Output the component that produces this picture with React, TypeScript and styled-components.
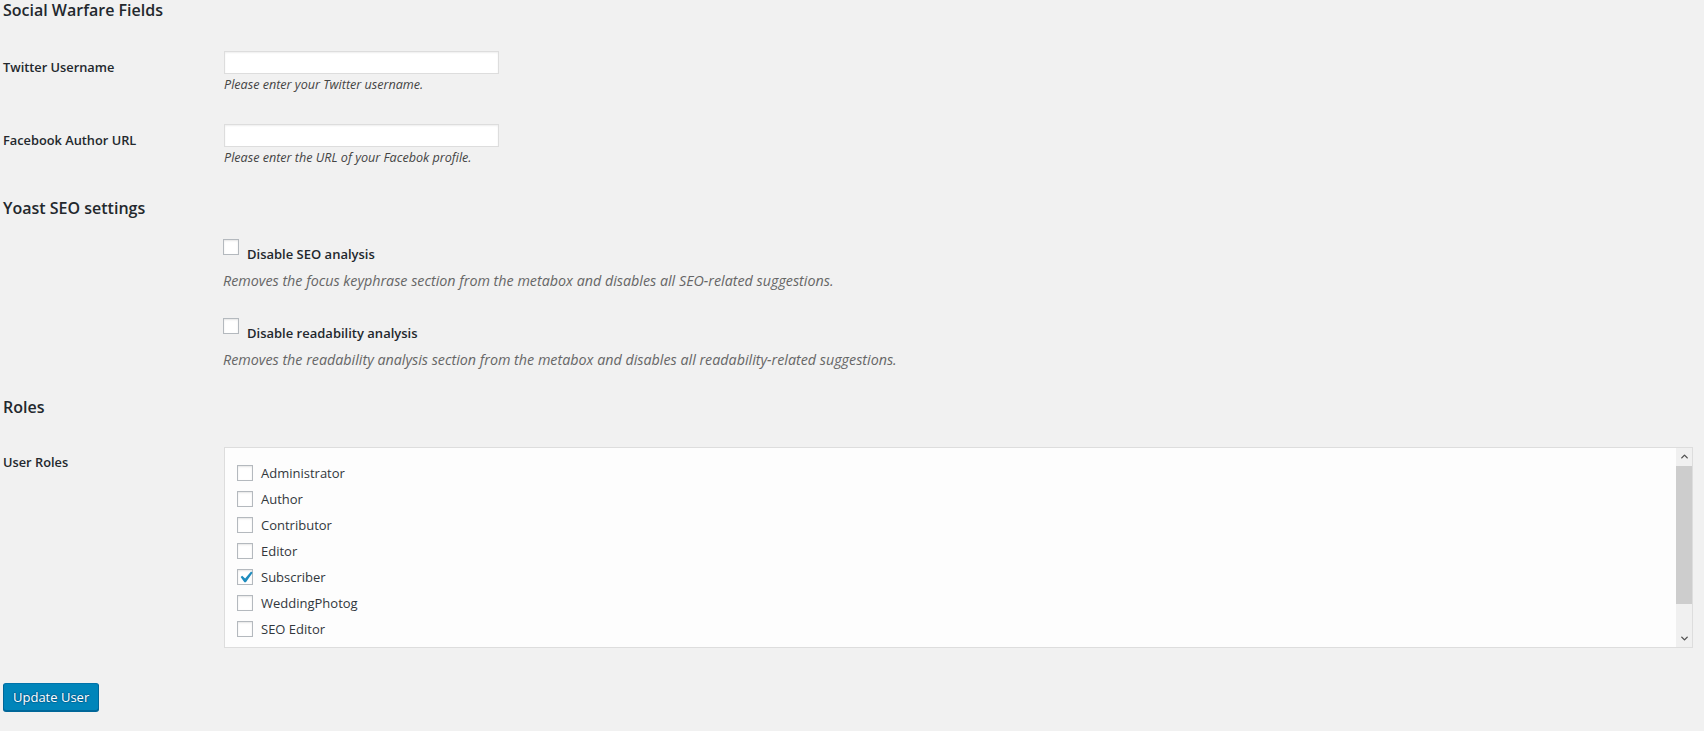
import React, { useState } from "react";
import styled, { createGlobalStyle } from "styled-components";
import { ChevronUp, ChevronDown } from "lucide-react";

const GlobalStyle = createGlobalStyle`
  html, body {
    margin: 0;
    padding: 0;
    background: #f1f1f1;
  }
  body {
    font-family: "Open Sans", "Noto Sans", sans-serif;
    color: #23282d;
    font-size: 13px;
  }
  * {
    box-sizing: border-box;
  }
`;

const Page = styled.form`
  padding: 0 11px 24px 3px;
  min-height: 731px;
`;

const SectionTitle: any = styled.h2`
  margin: ${(props: any) => props.gap || 0}px 0 0;
  font-size: 16px;
  line-height: 20px;
  font-weight: 600;
  color: #23282d;
`;

const FieldRow: any = styled.div`
  display: grid;
  grid-template-columns: 221px 1fr;
  margin-top: ${(props: any) => props.gap || 0}px;
`;

const FieldLabel: any = styled.label`
  display: block;
  padding-top: ${(props: any) => props.offset || 7}px;
  font-size: 12.8px;
  line-height: 18px;
  font-weight: 600;
  color: #23282d;
`;

const FieldCell = styled.div`
  display: flex;
  flex-direction: column;
  align-items: flex-start;
`;

const TextInput = styled.input`
  width: 275px;
  height: 23px;
  margin: 0;
  padding: 2px 6px;
  border: 1px solid #ddd;
  background: #fff;
  box-shadow: inset 0 1px 2px rgba(0, 0, 0, 0.07);
  font: inherit;
  outline: none;
`;

const Description: any = styled.p`
  margin: ${(props: any) => props.gap || 2}px 0 0;
  font-size: ${(props: any) => (props.muted ? 14.3 : 12.6)}px;
  line-height: 18px;
  font-style: italic;
  color: ${(props: any) => (props.muted ? "#666" : "#444")};
`;

const OptionBlock: any = styled.div`
  margin: ${(props: any) => props.gap || 0}px 0 0 220px;
`;

const OptionLine = styled.label`
  display: flex;
  align-items: flex-start;
  gap: 8px;
  cursor: pointer;
`;

const OptionText = styled.span`
  margin-top: 6px;
  font-size: 13px;
  line-height: 18px;
  font-weight: 600;
  color: #23282d;
`;

const Box: any = styled.span`
  flex: none;
  width: 16px;
  height: 16px;
  display: flex;
  align-items: center;
  justify-content: center;
  border: 1px solid #b4b9be;
  background: #fff;
  box-shadow: inset 0 1px 2px rgba(0, 0, 0, 0.1);
  color: #1e8cbe;
  overflow: visible;

  svg {
    flex: none;
    margin: -4px -4px -4px -3px;
  }
`;

const RolesPanel = styled.div`
  display: flex;
  height: 201px;
  border: 1px solid #ddd;
  background: #fdfdfd;
`;

const RolesList = styled.ul`
  flex: 1;
  list-style: none;
  margin: 0;
  padding: 13px 12px 0;
  overflow: hidden;
`;

const RoleItem = styled.li`
  display: flex;
  align-items: center;
  gap: 8px;
  height: 26px;
  padding-bottom: 2px;
  font-size: 13px;
  color: #32373c;
  cursor: pointer;
`;

const ScrollBar = styled.div`
  flex: none;
  width: 16px;
  display: flex;
  flex-direction: column;
  background: #f0f0f0;
`;

const ScrollArrow = styled.div`
  height: 17px;
  display: flex;
  align-items: center;
  justify-content: center;
  color: #505050;
`;

const ScrollTrack = styled.div`
  flex: 1;
  display: flex;
  flex-direction: column;
`;

const ScrollThumb = styled.div`
  height: 138px;
  margin-top: 1px;
  background: #cdcdcd;
`;

const SubmitButton = styled.button`
  display: block;
  margin-top: 35px;
  height: 28px;
  padding: 0 9px 2px;
  border: 1px solid #0073aa;
  border-color: #0073aa #006799 #006799;
  border-radius: 3px;
  background: #0085ba;
  box-shadow: 0 1px 0 #006799;
  color: #fff;
  font-family: inherit;
  font-size: 13px;
  line-height: 26px;
  text-shadow: 0 -1px 1px #006799, 1px 0 1px #006799, 0 1px 1px #006799, -1px 0 1px #006799;
  cursor: pointer;
`;

const CheckMark = () => (
  <svg width="23" height="23" viewBox="0 0 20 20">
    <path
      d="M14.83 4.89l1.34.94-5.81 8.38H9.02L5.78 9.67l1.34-1.25 2.57 2.4z"
      fill="currentColor"
    />
  </svg>
);

const Checkbox = ({ checked, onClick }: any) => (
  <Box onClick={onClick}>{checked && <CheckMark />}</Box>
);

const roleNames = [
  "Administrator",
  "Author",
  "Contributor",
  "Editor",
  "Subscriber",
  "WeddingPhotog",
  "SEO Editor"
];

const App = () => {
  const [roles, setRoles] = useState<Array<string>>(["Subscriber"]);
  const [seoOff, setSeoOff] = useState(false);
  const [readOff, setReadOff] = useState(false);

  const toggleRole = (name: string): void => {
    setRoles(
      roles.includes(name) ? roles.filter(r => r !== name) : [...roles, name]
    );
  };

  return (
    <>
      <GlobalStyle />
      <Page onSubmit={e => e.preventDefault()}>
        <SectionTitle>Social Warfare Fields</SectionTitle>

        <FieldRow gap={31}>
          <FieldLabel htmlFor="swp_twitter">Twitter Username</FieldLabel>
          <FieldCell>
            <TextInput id="swp_twitter" type="text" />
            <Description>Please enter your Twitter username.</Description>
          </FieldCell>
        </FieldRow>

        <FieldRow gap={30}>
          <FieldLabel htmlFor="swp_fb_author">Facebook Author URL</FieldLabel>
          <FieldCell>
            <TextInput id="swp_fb_author" type="text" />
            <Description>Please enter the URL of your Facebok profile.</Description>
          </FieldCell>
        </FieldRow>

        <SectionTitle gap={31}>Yoast SEO settings</SectionTitle>

        <OptionBlock gap={21}>
          <OptionLine>
            <Checkbox checked={seoOff} onClick={() => setSeoOff(!seoOff)} />
            <OptionText>Disable SEO analysis</OptionText>
          </OptionLine>
          <Description muted gap={9}>
            Removes the focus keyphrase section from the metabox and disables
            all SEO-related suggestions.
          </Description>
        </OptionBlock>

        <OptionBlock gap={28}>
          <OptionLine>
            <Checkbox checked={readOff} onClick={() => setReadOff(!readOff)} />
            <OptionText>Disable readability analysis</OptionText>
          </OptionLine>
          <Description muted gap={9}>
            Removes the readability analysis section from the metabox and
            disables all readability-related suggestions.
          </Description>
        </OptionBlock>

        <SectionTitle gap={28}>Roles</SectionTitle>

        <FieldRow gap={30}>
          <FieldLabel offset={6}>User Roles</FieldLabel>
          <RolesPanel>
            <RolesList>
              {roleNames.map(name => (
                <RoleItem key={name} onClick={() => toggleRole(name)}>
                  <Checkbox checked={roles.includes(name)} />
                  {name}
                </RoleItem>
              ))}
            </RolesList>
            <ScrollBar>
              <ScrollArrow>
                <ChevronUp size={11} strokeWidth={3} />
              </ScrollArrow>
              <ScrollTrack>
                <ScrollThumb />
              </ScrollTrack>
              <ScrollArrow>
                <ChevronDown size={11} strokeWidth={3} />
              </ScrollArrow>
            </ScrollBar>
          </RolesPanel>
        </FieldRow>

        <SubmitButton type="submit">Update User</SubmitButton>
      </Page>
    </>
  );
};

export default App;
